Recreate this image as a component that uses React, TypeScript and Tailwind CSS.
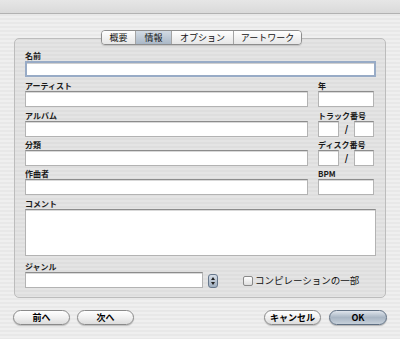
import React from "react";

const inputCls =
  "h-[16px] bg-white border border-[#b3b3b3] border-t-[#8c8c8c] shadow-[inset_0_1px_0_#d9d9d9]";
const labelCls = "h-[11px] leading-[11px] text-[8px] font-bold text-[#1a1a1a]";

const Field = ({ label, className = "" }: { label: string; className?: string }) => (
  <div className={className}>
    <div className={labelCls}>{label}</div>
    <div className={inputCls} />
  </div>
);

const PairField = ({ label }: { label: string }) => (
  <div>
    <div className={labelCls}>{label}</div>
    <div className="flex items-center">
      <div className={`${inputCls} w-[21px]`} />
      <span className="w-[15px] text-center text-[9px] font-bold leading-[16px]">/</span>
      <div className={`${inputCls} w-[20px]`} />
    </div>
  </div>
);

// left / right columns share one grid
const Row = ({ left, right, className = "" }: { left: React.ReactNode; right: React.ReactNode; className?: string }) => (
  <div className={`grid grid-cols-[283px_56px] gap-x-[10px] ${className}`}>
    {left}
    {right}
  </div>
);

const tabs = [
  { name: "概要", w: "w-[33px]" },
  { name: "情報", w: "w-[36px]", active: true },
  { name: "オプション", w: "w-[62px]" },
  { name: "アートワーク", w: "w-[68px]" },
];

const Button = ({ children, primary }: { children: React.ReactNode; primary?: boolean }) => (
  <button
    className={
      primary
        ? "h-[15px] w-[58px] rounded-full border border-[#5f6f82] bg-gradient-to-b from-[#dfe5ec] via-[#a9b6c4] to-[#c6d0da] text-[9px] font-bold leading-[13px] text-black shadow-[0_1px_1px_rgba(0,0,0,0.25)]"
        : "h-[15px] w-[57px] rounded-full border border-[#8a8a8a] bg-gradient-to-b from-white via-[#f0f0f0] to-[#dcdcdc] text-[9px] font-bold leading-[13px] text-black shadow-[0_1px_1px_rgba(0,0,0,0.2)]"
    }
  >
    {children}
  </button>
);

export default function App() {
  return (
    <div className="w-[400px] h-[339px] overflow-hidden flex flex-col font-['Noto_Sans_CJK_JP',sans-serif] bg-[repeating-linear-gradient(180deg,#efefef_0px,#efefef_2px,#e8e8e8_2px,#e8e8e8_4px)]">
      {/* title strip */}
      <div className="h-[14px] bg-gradient-to-b from-[#e6e6e6] to-[#dadada] border-b border-[#b2b2b2]" />

      <div className="px-[14px] pt-[16px]">
        {/* tabs */}
        <div className="relative z-10 -mb-[7px] flex justify-center pl-[3px]">
          <div className="flex h-[15px] rounded-[4px] border border-[#8d8d8d] overflow-hidden shadow-[0_1px_1px_rgba(0,0,0,0.15)]">
            {tabs.map((t, i) => (
              <div
                key={t.name}
                className={`${t.w} flex items-center justify-center text-[9px] leading-none text-[#111] ${
                  i > 0 ? "border-l border-[#a4a4a4]" : ""
                } ${
                  t.active
                    ? "bg-gradient-to-b from-[#d3dbe4] to-[#aab8c7]"
                    : "bg-gradient-to-b from-white to-[#e6e6e6]"
                }`}
              >
                {t.name}
              </div>
            ))}
          </div>
        </div>

        {/* group box */}
        <div className="h-[260px] rounded-[5px] border border-[#bcbcbc] bg-black/[0.045] pl-[10px] pr-[9px] pt-[11px]">
          <div>
            <div className={labelCls}>名前</div>
            <div className="h-[16px] bg-white border-2 border-[#98abc6] shadow-[inset_0_1px_0_#cfcfcf]" />
          </div>

          <Row className="mt-[3px]" left={<Field label="アーティスト" />} right={<Field label="年" />} />
          <Row className="mt-[3px]" left={<Field label="アルバム" />} right={<PairField label="トラック番号" />} />
          <Row className="mt-[2px]" left={<Field label="分類" />} right={<PairField label="ディスク番号" />} />
          <Row className="mt-[2px]" left={<Field label="作曲者" />} right={<Field label="BPM" />} />

          <div className="mt-[3px]">
            <div className={labelCls}>コメント</div>
            <div className="h-[47px] bg-white border border-[#b3b3b3] border-t-[#8c8c8c] shadow-[inset_0_1px_0_#d9d9d9]" />
          </div>

          <div className="mt-[5px]">
            <div className={labelCls}>ジャンル</div>
            <div className="flex items-center">
              <div className={`${inputCls} w-[178px]`} />
              <div className="ml-[5px] mt-[2px] flex h-[14px] w-[10px] flex-col items-center justify-center gap-[2px] rounded-[3px] border border-[#66778c] bg-gradient-to-b from-[#d6dde6] to-[#9fafc0]">
                <span className="h-0 w-0 border-x-[2px] border-b-[3px] border-x-transparent border-b-[#222]" />
                <span className="h-0 w-0 border-x-[2px] border-t-[3px] border-x-transparent border-t-[#222]" />
              </div>
              <label className="ml-[25px] mt-[2px] flex items-center gap-[2px]">
                <span className="h-[10px] w-[10px] rounded-[2px] border border-[#8a8a8a] bg-gradient-to-b from-white to-[#dedede]" />
                <span className="text-[9.5px] leading-none text-[#111]">コンピレーションの一部</span>
              </label>
            </div>
          </div>
        </div>
      </div>

      {/* bottom buttons */}
      <div className="mt-[12px] flex justify-between px-[13px]">
        <div className="flex gap-[7px]">
          <Button>前へ</Button>
          <Button>次へ</Button>
        </div>
        <div className="flex gap-[8px]">
          <Button>キャンセル</Button>
          <Button primary>OK</Button>
        </div>
      </div>
    </div>
  );
}
